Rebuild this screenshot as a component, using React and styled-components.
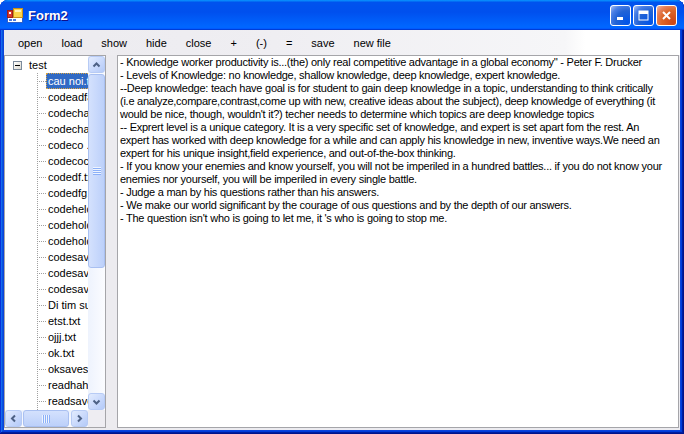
import React from 'react';
import styled, { createGlobalStyle } from 'styled-components';

const UI_FONT = '"Liberation Sans", Arial, sans-serif';

const GlobalStyle = createGlobalStyle`
  html, body {
    margin: 0;
    padding: 0;
    background: #fff;
  }
  body {
    font-family: ${UI_FONT};
    font-size: 11px;
    color: #000;
  }
`;

const Window = styled.div`
  width: 684px;
  height: 434px;
  display: flex;
  flex-direction: column;
  border-radius: 8px 8px 0 0;
  background: #0b44dc;
  box-shadow: inset -1px -1px #00138c, inset 1px 1px #0831d9,
    inset -2px -2px #001ea0, inset 2px 2px #166aee,
    inset -3px -3px #003bda, inset 3px 3px #0855dd;
`;

const TitleBar = styled.div`
  height: 30px;
  flex: none;
  box-sizing: border-box;
  display: flex;
  align-items: center;
  padding: 0 7px 0 7px;
  border-radius: 8px 8px 0 0;
  background: linear-gradient(180deg, #0997ff, #0053ee 8%, #0050ee 40%, #0066ff 88%, #0066ff 93%, #005bff 95%, #003dd7 96%, #003dd7);
`;

const Title = styled.span`
  margin-left: 5px;
  font-weight: bold;
  font-size: 13px;
  color: #fff;
  text-shadow: 1px 1px #0f1089;
`;

const Controls = styled.div`
  margin-left: auto;
  display: flex;
  gap: 2px;
  padding-top: 1px;
`;

const CaptionButton = styled.div`
  width: 21px;
  height: 21px;
  box-sizing: border-box;
  border: 1px solid #fff;
  border-radius: 3px;
  display: flex;
  align-items: center;
  justify-content: center;
  background: ${p => p.close
    ? 'radial-gradient(circle at 85% 85%, #cc4616 0%, #dc6527 50%, #e5805a 75%, #f3b9a3 100%)'
    : 'radial-gradient(circle at 85% 85%, #0054e9 0%, #2263d5 50%, #4a7fe6 75%, #a9c2f2 100%)'};
`;

const Frame = styled.div`
  flex: 1;
  min-height: 0;
  display: flex;
  padding: 0 4px 4px 4px;
`;

const Client = styled.div`
  flex: 1;
  display: flex;
  flex-direction: column;
  background: #ecebef;
  min-width: 0;
`;

const MenuBar = styled.div`
  height: 25px;
  flex: none;
  display: flex;
  align-items: center;
  padding-left: 5px;
  background: linear-gradient(to right, #ecebef 0%, #efeef2 40%, #f6f6f8 83%, #ffffff 86%);
`;

const MenuItem = styled.span`
  padding: 0 9px;
  margin-right: 1px;
  white-space: nowrap;
`;

const Body = styled.div`
  flex: 1;
  min-height: 0;
  display: flex;
  padding: 0 1px 2px 0;
`;

const TreePanel = styled.div`
  width: 102px;
  flex: none;
  box-sizing: border-box;
  border: 1px solid #a5a5a9;
  background: #fff;
  display: grid;
  grid-template-columns: 1fr 17px;
  grid-template-rows: 1fr 17px;
  overflow: hidden;
`;

const TreeList = styled.div`
  overflow: hidden;
  padding-top: 1px;
  min-width: 0;
`;

const Row = styled.div`
  height: 16px;
  display: flex;
  align-items: center;
  padding-left: ${p => p.indent}px;
  white-space: nowrap;
`;

const ExpandBox = styled.span`
  width: 9px;
  height: 9px;
  box-sizing: border-box;
  border: 1px solid #7b8a9c;
  background: linear-gradient(135deg, #fff, #dcd9cf);
  display: flex;
  align-items: center;
  justify-content: center;
  flex: none;
  &::after {
    content: '';
    width: 5px;
    height: 1px;
    background: #000;
  }
`;

const Connector = styled.span`
  width: 9px;
  height: 16px;
  flex: none;
  background-image:
    repeating-linear-gradient(to bottom, #a0a0a0 0 1px, transparent 1px 2px),
    repeating-linear-gradient(to right, #a0a0a0 0 1px, transparent 1px 2px);
  background-size: 1px 100%, 100% 1px;
  background-position: 0 0, 0 8px;
  background-repeat: no-repeat;
`;

const NodeLabel = styled.span`
  line-height: 14px;
  padding: 0 1px;
  margin-left: ${p => p.gap || 0}px;
  border: 1px ${p => p.selected ? 'dotted #d9a441' : 'solid transparent'};
  background: ${p => p.selected ? '#316ac5' : 'transparent'};
  color: ${p => p.selected ? '#fff' : '#000'};
`;

const VScroll = styled.div`
  display: flex;
  flex-direction: column;
  background: linear-gradient(to right, #eef3fd, #fbfcff);
`;

const HScroll = styled.div`
  display: flex;
  background: linear-gradient(to bottom, #eef3fd, #fbfcff);
`;

const Corner = styled.div`
  background: #eeedf2;
`;

const ScrollButton = styled.div`
  width: 17px;
  height: 17px;
  flex: none;
  box-sizing: border-box;
  border: 1px solid #b7cbf5;
  border-radius: 3px;
  background: linear-gradient(135deg, #e3ecfe 0%, #c9d9fc 55%, #b4caf8 100%);
  display: flex;
  align-items: center;
  justify-content: center;
`;

const Thumb = styled.div`
  flex: none;
  box-sizing: border-box;
  border: 1px solid #a9c0f1;
  border-radius: 3px;
  background: ${p => p.horizontal
    ? 'linear-gradient(to bottom, #d4e1fd, #bcd0fa)'
    : 'linear-gradient(to right, #d4e1fd, #bcd0fa)'};
  margin: ${p => p.horizontal ? '0 0 0 1px' : '1px 0 0 0'};
  width: ${p => p.horizontal ? `${p.size}px` : 'auto'};
  height: ${p => p.horizontal ? 'auto' : `${p.size}px`};
  display: flex;
  align-items: center;
  justify-content: center;
`;

const Spacer = styled.div`
  flex: 1;
`;

const Splitter = styled.div`
  width: 11px;
  flex: none;
`;

const TextBox = styled.div`
  flex: 1;
  min-width: 0;
  box-sizing: border-box;
  border: 1px solid #a5a5a9;
  background: #fff;
  padding: 0 2px 0 2px;
  overflow: hidden;
  line-height: 13px;
  font-size: 11px;
  letter-spacing: -0.25px;
`;

const TextLine = styled.div`
  white-space: pre;
`;

const Chevron = ({ dir }) => {
  const pts = {
    up: '4.5,9.5 7.5,6.5 10.5,9.5',
    down: '4.5,6.5 7.5,9.5 10.5,6.5',
    left: '9,4.5 6,7.5 9,10.5',
    right: '6,4.5 9,7.5 6,10.5',
  }[dir];
  return (
    <svg width="15" height="15" viewBox="0 0 15 15">
      <polyline points={pts} fill="none" stroke="#4d6185" strokeWidth="2" />
    </svg>
  );
};

const Grip = ({ horizontal }) => (
  <svg width="8" height="8" viewBox="0 0 8 8">
    {[0, 2, 4, 6].map(i =>
      horizontal
        ? <g key={i}><rect x={i} y="0" width="1" height="8" fill="#eef4fe" /><rect x={i + 1} y="0" width="1" height="8" fill="#8cb0f8" /></g>
        : <g key={i}><rect x="0" y={i} width="8" height="1" fill="#eef4fe" /><rect x="0" y={i + 1} width="8" height="1" fill="#8cb0f8" /></g>
    )}
  </svg>
);

const AppIcon = () => (
  <svg width="16" height="16" viewBox="0 0 16 16">
    <rect x="0.5" y="10.5" width="15" height="5" fill="#fff" stroke="#2f5fc8" />
    <rect x="2" y="12" width="3" height="2" fill="#4d7be0" />
    <rect x="6" y="12" width="3" height="2" fill="#4d7be0" />
    <rect x="0.5" y="3.5" width="5" height="7" fill="#d8352b" stroke="#9c1f18" />
    <rect x="2" y="5" width="2" height="2" fill="#fff" />
    <rect x="6.5" y="1.5" width="9" height="9" fill="#fbd54c" stroke="#c8901a" />
    <rect x="8" y="3" width="6" height="2" fill="#fff3b8" />
  </svg>
);

const MinGlyph = () => (
  <svg width="13" height="13" viewBox="0 0 13 13">
    <rect x="3" y="8" width="6" height="3" fill="#fff" />
  </svg>
);

const MaxGlyph = () => (
  <svg width="13" height="13" viewBox="0 0 13 13">
    <rect x="2" y="2" width="9" height="9" fill="none" stroke="#fff" strokeWidth="1" />
    <rect x="2" y="2" width="9" height="3" fill="#fff" />
  </svg>
);

const CloseGlyph = () => (
  <svg width="13" height="13" viewBox="0 0 13 13">
    <path d="M3 3 L10 10 M10 3 L3 10" stroke="#fff" strokeWidth="2" />
  </svg>
);

const menu = ['open', 'load', 'show', 'hide', 'close', '+', '(-)', '=', 'save', 'new file'];

const files = [
  'cau noi.txt', 'codeadfadf.txt', 'codechay.txt', 'codechay2.txt', 'codeco .txt',
  'codecocde.txt', 'codedf.txt', 'codedfg.txt', 'codehelo.txt', 'codehold.txt',
  'codehold2.txt', 'codesave.txt', 'codesave1.txt', 'codesave2.txt', 'Di tim su.txt',
  'etst.txt', 'ojjj.txt', 'ok.txt', 'oksaves.txt', 'readhaha.txt', 'readsave.txt',
  'test.txt', 'vidu.txt',
];

const lines = [
  "- Knowledge worker productivity is...(the) only real competitive advantage in a global economy'' - Peter F. Drucker",
  '- Levels of Knowledge: no knowledge, shallow knowledge, deep knowledge, expert knowledge.',
  '--Deep knowledge: teach have goal is for student to gain deep knowledge in a topic, understanding to think critically',
  '(i.e analyze,compare,contrast,come up with new, creative ideas about the subject), deep knowledge of everything (it',
  "would be nice, though, wouldn't it?) techer needs to determine which topics are deep knowledge topics",
  '-- Exprert level is a unique category. It is a very specific set of knowledge, and expert is set apart fom the rest. An',
  'expert has worked with deep knowledge for a while and can apply his knowledge in new, inventive ways.We need an',
  'expert for his unique insight,field experience, and out-of-the-box thinking.',
  '- If you know your enemies and know yourself, you will not be imperiled in a hundred battles... if you do not know your',
  'enemies nor yourself, you will be imperiled in every single battle.',
  '- Judge a man by his questions rather than his answers.',
  '- We make our world significant by the courage of ous questions and by the depth of our answers.',
  "- The question isn't who is going to let me, it 's who is going to stop me.",
];

export default function App() {
  return (
    <>
      <GlobalStyle />
      <Window>
        <TitleBar>
          <AppIcon />
          <Title>Form2</Title>
          <Controls>
            <CaptionButton><MinGlyph /></CaptionButton>
            <CaptionButton><MaxGlyph /></CaptionButton>
            <CaptionButton close><CloseGlyph /></CaptionButton>
          </Controls>
        </TitleBar>
        <Frame>
          <Client>
            <MenuBar>
              {menu.map(m => <MenuItem key={m}>{m}</MenuItem>)}
            </MenuBar>
            <Body>
              <TreePanel>
                <TreeList>
                  <Row indent={8}>
                    <ExpandBox />
                    <NodeLabel gap={5}>test</NodeLabel>
                  </Row>
                  {files.map((f, i) => (
                    <Row key={f} indent={32}>
                      <Connector />
                      <NodeLabel selected={i === 0}>{f}</NodeLabel>
                    </Row>
                  ))}
                </TreeList>
                <VScroll>
                  <ScrollButton><Chevron dir="up" /></ScrollButton>
                  <Thumb size={194}><Grip /></Thumb>
                  <Spacer />
                  <ScrollButton><Chevron dir="down" /></ScrollButton>
                </VScroll>
                <HScroll>
                  <ScrollButton><Chevron dir="left" /></ScrollButton>
                  <Thumb horizontal size={46}><Grip horizontal /></Thumb>
                  <Spacer />
                  <ScrollButton><Chevron dir="right" /></ScrollButton>
                </HScroll>
                <Corner />
              </TreePanel>
              <Splitter />
              <TextBox>
                {lines.map((l, i) => <TextLine key={i}>{l}</TextLine>)}
              </TextBox>
            </Body>
          </Client>
        </Frame>
      </Window>
    </>
  );
}
